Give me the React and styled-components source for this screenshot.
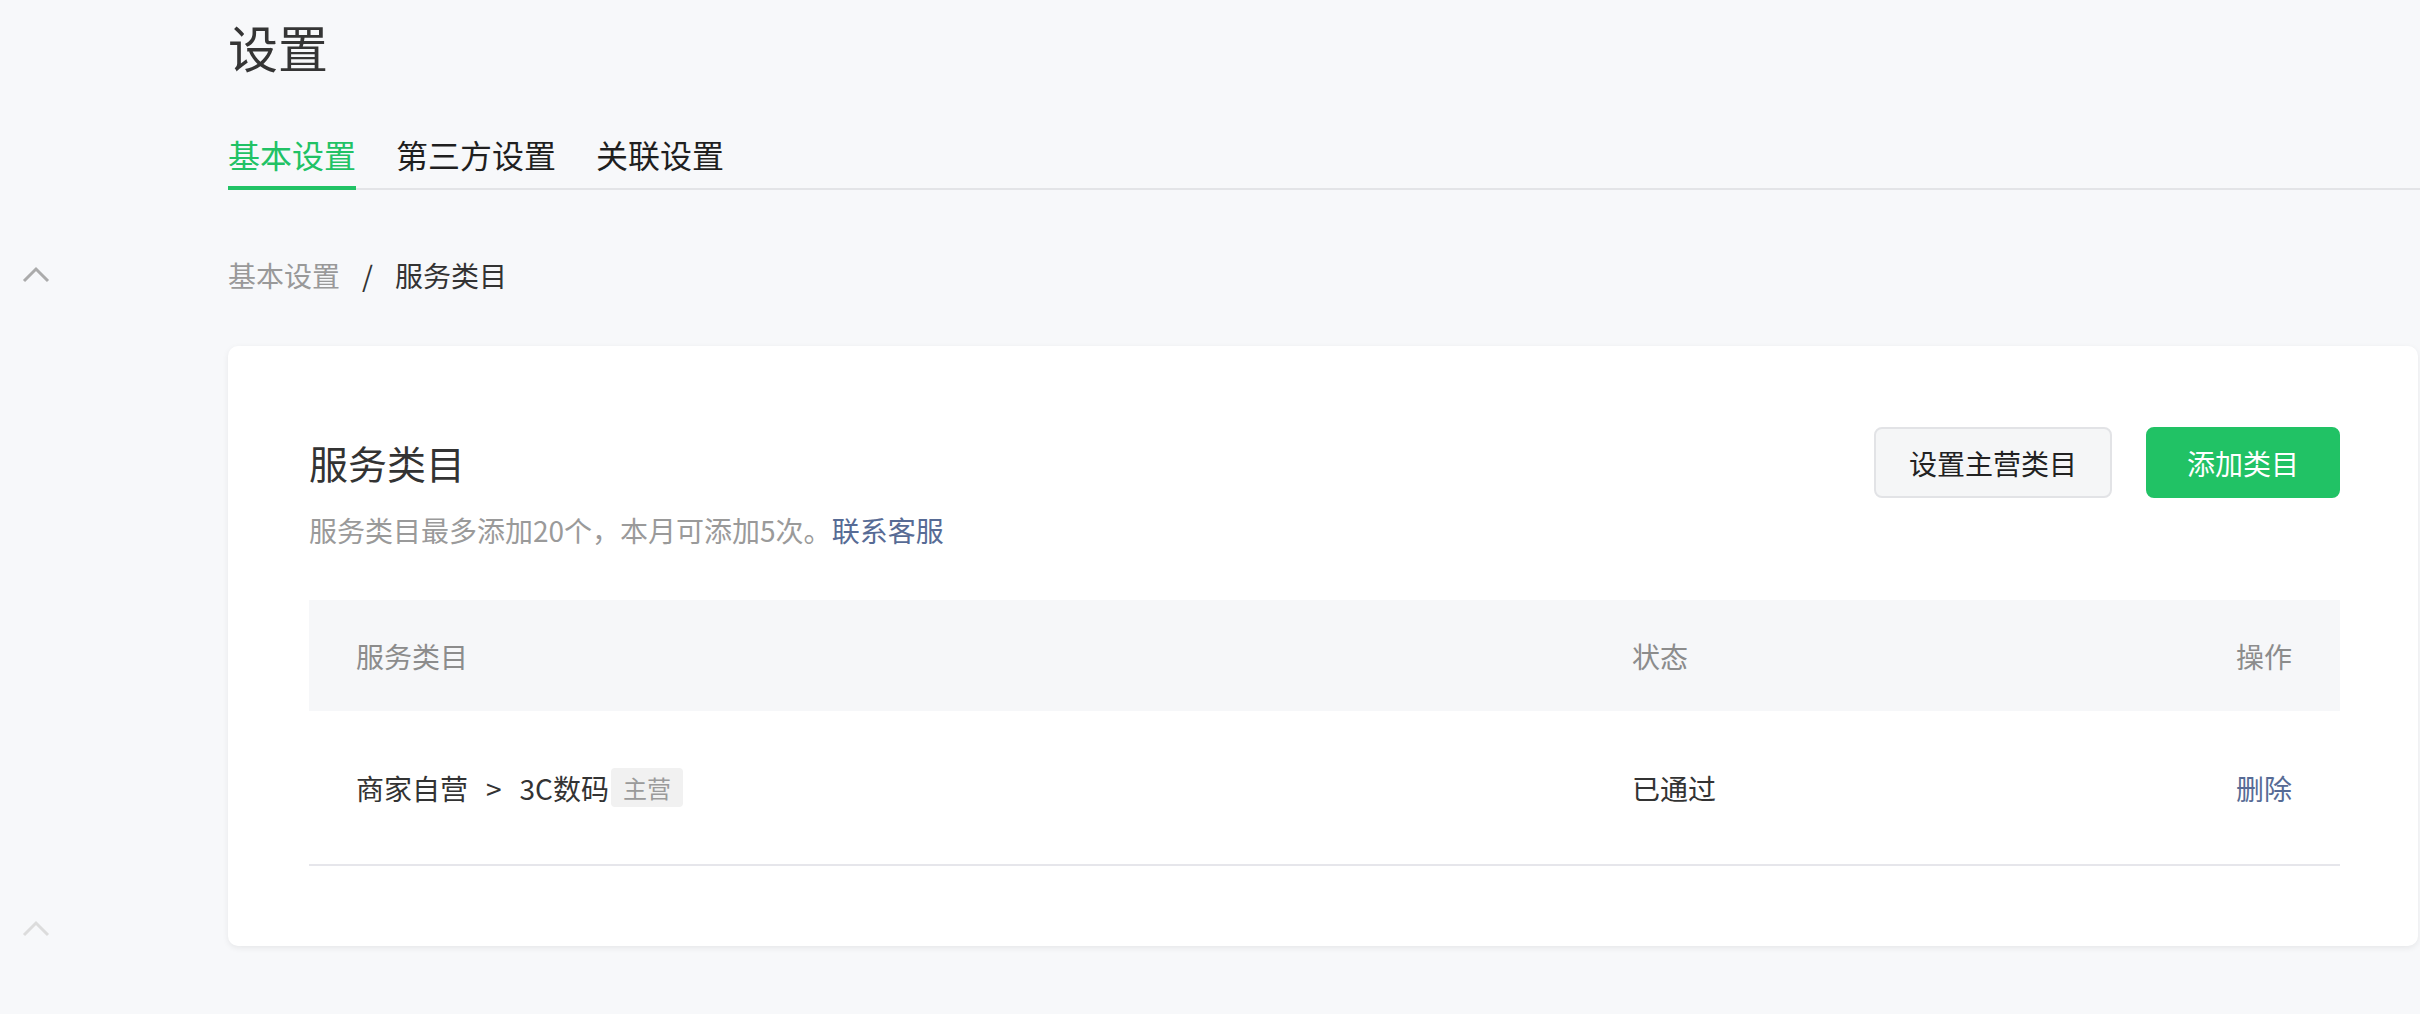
import React from 'react';
import styled, { createGlobalStyle } from 'styled-components';

const GlobalStyle = createGlobalStyle`
  * { box-sizing: border-box; }
  html, body {
    margin: 0;
    padding: 0;
    background: #f7f8fa;
    font-family: "Noto Sans CJK SC", "Noto Sans", sans-serif;
    color: #333;
  }
`;

const Page = styled.div`
  display: flex;
  width: 2420px;
  min-height: 1014px;
`;

const Sidebar = styled.div`
  width: 228px;
  flex-shrink: 0;
  display: flex;
  flex-direction: column;
  padding-top: 266px;
  padding-left: 22px;
  gap: 636px;
`;

const Chevron = styled.svg`
  width: 28px;
  height: 18px;
  display: block;
  color: ${props => props.faded ? '#dcdcdc' : '#ababab'};
`;

const Main = styled.div`
  flex: 1;
  display: flex;
  flex-direction: column;
  padding-right: 2px;
`;

const PageTitle = styled.h1`
  margin: 0;
  font-size: 50px;
  font-weight: 400;
  line-height: 92px;
  color: #353535;
`;

const Tabs = styled.div`
  display: flex;
  gap: 40px;
  margin-top: 40px;
  margin-right: -2px;
  border-bottom: 2px solid #e3e4e7;
`;

const Tab = styled.div`
  font-size: 32px;
  line-height: 44px;
  padding-bottom: 10px;
  margin-bottom: -2px;
  border-bottom: 4px solid ${props => props.active ? '#21c265' : 'transparent'};
  color: ${props => props.active ? '#21c265' : '#1f1f1f'};
  cursor: pointer;
`;

const Breadcrumb = styled.div`
  display: flex;
  align-items: center;
  margin-top: 65px;
  font-size: 28px;
  line-height: 40px;
`;

const Crumb = styled.span`
  color: ${props => props.current ? '#333' : '#999'};
`;

const Separator = styled.span`
  color: #333;
  margin: 0 22px;
`;

const Card = styled.div`
  margin-top: 51px;
  background: #fff;
  border-radius: 10px;
  box-shadow: 0 2px 6px rgba(0, 0, 0, 0.07);
  padding: 81px 78px 80px 81px;
`;

const CardHeader = styled.div`
  display: flex;
  justify-content: space-between;
  align-items: flex-start;
`;

const CardTitle = styled.h2`
  margin: 0;
  font-size: 39px;
  font-weight: 400;
  line-height: 70px;
  color: #333;
`;

const CardDesc = styled.p`
  margin: 13px 0 0;
  font-size: 28px;
  line-height: 40px;
  color: #9a9a9a;
`;

const Link = styled.a`
  color: #576b95;
  text-decoration: none;
  cursor: pointer;
`;

const Actions = styled.div`
  display: flex;
  gap: 34px;
`;

const Button = styled.button`
  height: 71px;
  padding: 0 ${props => props.primary ? '39px' : '33px'};
  font-family: inherit;
  font-size: 28px;
  border-radius: 8px;
  cursor: pointer;
  border: 2px solid ${props => props.primary ? '#21c265' : '#e2e3e6'};
  background: ${props => props.primary ? '#21c265' : '#f5f6f7'};
  color: ${props => props.primary ? '#fff' : '#222'};
`;

const Table = styled.div`
  margin-top: 50px;
`;

const Row = styled.div`
  display: grid;
  grid-template-columns: 1fr 400px 260px;
  align-items: center;
  padding: 0 48px 0 47px;
  height: ${props => props.head ? '111px' : '155px'};
  background: ${props => props.head ? '#f6f7f9' : '#fff'};
  border-bottom: ${props => props.head ? 'none' : '2px solid #e6e6eb'};
  font-size: 28px;
  color: ${props => props.head ? '#8c8c8c' : '#333'};
`;

const Cell = styled.div`
  display: flex;
  align-items: center;
  justify-content: ${props => props.right ? 'flex-end' : 'flex-start'};
`;

const Arrow = styled.span`
  margin: 0 18px;
`;

const Tag = styled.span`
  margin-left: 2px;
  padding: 0 12px;
  height: 39px;
  line-height: 39px;
  font-size: 24px;
  color: #9a9a9a;
  background: #f1f1f1;
  border-radius: 4px;
`;

const ChevronUp = ({ faded }) => (
  <Chevron faded={faded} viewBox="0 0 28 18" fill="none">
    <path d="M2 15 L14 3 L26 15" stroke="currentColor" strokeWidth="3" />
  </Chevron>
);

const App = () => {
  return (
    <>
      <GlobalStyle />
      <Page>
        <Sidebar>
          <ChevronUp />
          <ChevronUp faded />
        </Sidebar>
        <Main>
          <PageTitle>设置</PageTitle>
          <Tabs>
            <Tab active>基本设置</Tab>
            <Tab>第三方设置</Tab>
            <Tab>关联设置</Tab>
          </Tabs>
          <Breadcrumb>
            <Crumb>基本设置</Crumb>
            <Separator>/</Separator>
            <Crumb current>服务类目</Crumb>
          </Breadcrumb>
          <Card>
            <CardHeader>
              <div>
                <CardTitle>服务类目</CardTitle>
                <CardDesc>
                  服务类目最多添加20个，本月可添加5次。<Link>联系客服</Link>
                </CardDesc>
              </div>
              <Actions>
                <Button>设置主营类目</Button>
                <Button primary>添加类目</Button>
              </Actions>
            </CardHeader>
            <Table>
              <Row head>
                <Cell>服务类目</Cell>
                <Cell>状态</Cell>
                <Cell right>操作</Cell>
              </Row>
              <Row>
                <Cell>
                  商家自营<Arrow>&gt;</Arrow>3C数码<Tag>主营</Tag>
                </Cell>
                <Cell>已通过</Cell>
                <Cell right><Link>删除</Link></Cell>
              </Row>
            </Table>
          </Card>
        </Main>
      </Page>
    </>
  );
};

export default App;
